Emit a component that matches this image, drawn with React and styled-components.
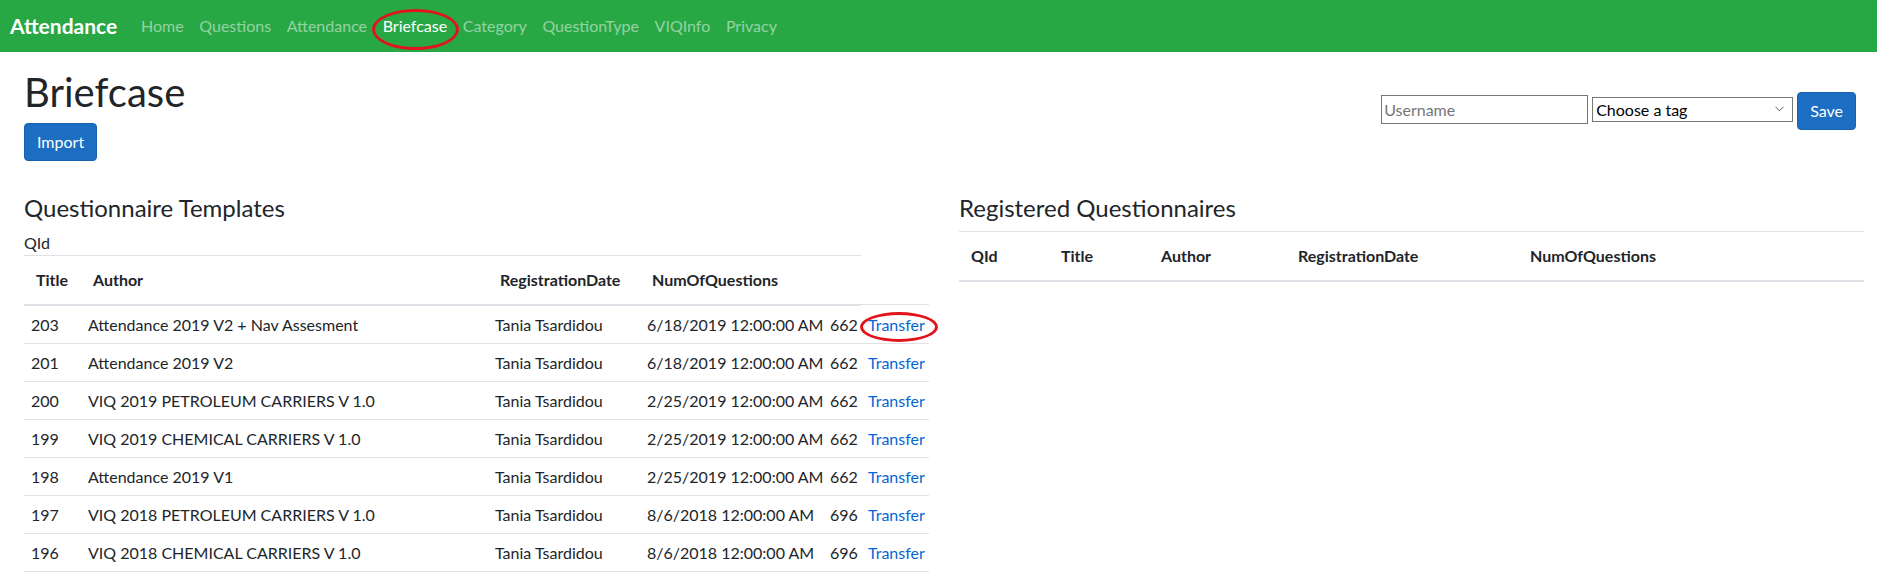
import React from 'react';
import styled, { createGlobalStyle } from 'styled-components';

const templates = [
  { id: 203, title: 'Attendance 2019 V2 + Nav Assesment', date: '6/18/2019 12:00:00 AM', num: 662 },
  { id: 201, title: 'Attendance 2019 V2', date: '6/18/2019 12:00:00 AM', num: 662 },
  { id: 200, title: 'VIQ 2019 PETROLEUM CARRIERS V 1.0', date: '2/25/2019 12:00:00 AM', num: 662 },
  { id: 199, title: 'VIQ 2019 CHEMICAL CARRIERS V 1.0', date: '2/25/2019 12:00:00 AM', num: 662 },
  { id: 198, title: 'Attendance 2019 V1', date: '2/25/2019 12:00:00 AM', num: 662 },
  { id: 197, title: 'VIQ 2018 PETROLEUM CARRIERS V 1.0', date: '8/6/2018 12:00:00 AM', num: 696 },
  { id: 196, title: 'VIQ 2018 CHEMICAL CARRIERS V 1.0', date: '8/6/2018 12:00:00 AM', num: 696 },
];

const navItems = ['Home', 'Questions', 'Attendance', 'Briefcase', 'Category', 'QuestionType', 'VIQInfo', 'Privacy'];

/* column widths picked off the screenshot */
const leftCols = [57, 407, 152, 183, 38, 68];
const rightCols = [90, 100, 137, 232, 346];

function App() {
  return (
    <>
      <GlobalStyle />
      <Navbar>
        <Brand href="#">Attendance</Brand>
        <NavList>
          {navItems.map((item) => (
            <li key={item}>
              <NavLink href="#" $active={item === 'Briefcase'}>
                {item}
                {item === 'Briefcase' && <Marker $t={3} $r={-4} $b={-4} $l={-3} />}
              </NavLink>
            </li>
          ))}
        </NavList>
      </Navbar>

      <Main>
        <Header>
          <div>
            <PageTitle>Briefcase</PageTitle>
            <Button>Import</Button>
          </div>
          <Form>
            <Input placeholder="Username" />
            <SelectWrap>
              <Select defaultValue="">
                <option value="">Choose a tag</option>
              </Select>
              <Chevron width="9" height="6" viewBox="0 0 9 6">
                <path d="M0.5 0.8 L4.5 4.8 L8.5 0.8" fill="none" stroke="#555" strokeWidth="1" />
              </Chevron>
            </SelectWrap>
            <Button>Save</Button>
          </Form>
        </Header>

        <Columns>
          <section>
            <SectionTitle>Questionnaire Templates</SectionTitle>
            <Caption>QId</Caption>
            <Table>
              <colgroup>
                {leftCols.map((w, i) => (
                  <Col key={i} $w={w} />
                ))}
              </colgroup>
              <thead>
                <tr>
                  <Th>Title</Th>
                  <Th>Author</Th>
                  <Th>RegistrationDate</Th>
                  <Th>NumOfQuestions</Th>
                  <Th />
                </tr>
              </thead>
              <tbody>
                {templates.map((t, i) => (
                  <tr key={t.id}>
                    <Td>{t.id}</Td>
                    <Td>{t.title}</Td>
                    <Td>Tania Tsardidou</Td>
                    <Td>{t.date}</Td>
                    <Td>{t.num}</Td>
                    <Td>
                      <Link href="#">
                        Transfer
                        {i === 0 && <Marker $t={-3} $r={-13} $b={-8} $l={-8} />}
                      </Link>
                    </Td>
                  </tr>
                ))}
              </tbody>
            </Table>
          </section>

          <section>
            <SectionTitle>Registered Questionnaires</SectionTitle>
            <Table>
              <colgroup>
                {rightCols.map((w, i) => (
                  <Col key={i} $w={w} />
                ))}
              </colgroup>
              <thead>
                <tr>
                  <Th>QId</Th>
                  <Th>Title</Th>
                  <Th>Author</Th>
                  <Th>RegistrationDate</Th>
                  <Th>NumOfQuestions</Th>
                </tr>
              </thead>
              <tbody />
            </Table>
          </section>
        </Columns>
      </Main>
    </>
  );
}

const GlobalStyle = createGlobalStyle`
  * { box-sizing: border-box; }
  body {
    margin: 0;
    font-family: "Segoe UI", Lato, "Liberation Sans", sans-serif;
    font-size: 16px;
    line-height: 1.5;
    color: #212529;
    background: #fff;
  }
`;

const Navbar = styled.nav`
  display: flex;
  align-items: center;
  height: 52px;
  padding: 0 10px;
  background: #28a745;
`;

const Brand = styled.a`
  margin-right: 16px;
  font-size: 21px;
  font-weight: 700;
  line-height: 30px;
  color: #fff;
  text-decoration: none;
`;

const NavList = styled.ul`
  display: flex;
  margin: 0;
  padding: 0;
  list-style: none;
`;

const NavLink = styled.a`
  position: relative;
  display: block;
  padding: 8px 7.8px;
  line-height: 24px;
  color: ${(p) => (p.$active ? '#fff' : 'rgba(255, 255, 255, 0.5)')};
  text-decoration: none;
`;

/* red hand-drawn style ring laid over a link */
const Marker = styled.span`
  position: absolute;
  top: ${(p) => p.$t}px;
  right: ${(p) => p.$r}px;
  bottom: ${(p) => p.$b}px;
  left: ${(p) => p.$l}px;
  border: 3.5px solid #e3131b;
  border-radius: 50%;
  pointer-events: none;
`;

const Main = styled.main`
  padding: 16px 13px 0 24px;
`;

const Header = styled.div`
  display: flex;
  justify-content: space-between;
  align-items: flex-start;
`;

const PageTitle = styled.h1`
  margin: 0 0 7px;
  font-size: 40px;
  font-weight: 400;
  line-height: 1.2;
`;

const Button = styled.button`
  display: inline-block;
  padding: 6px 12px;
  font-family: inherit;
  font-size: 16px;
  line-height: 24px;
  color: #fff;
  background: #1b6ec2;
  border: 1px solid #1861ac;
  border-radius: 4px;
`;

const Form = styled.form`
  display: flex;
  align-items: center;
  gap: 4px;
  margin: 24px 8px 0 0;
`;

const Input = styled.input`
  width: 207px;
  height: 29px;
  margin-top: -4px;
  padding: 1px 2px;
  font-family: inherit;
  font-size: 16px;
  color: #212529;
  border: 1px solid #767676;
  border-radius: 0;
  &::placeholder {
    color: #757575;
  }
`;

const SelectWrap = styled.span`
  position: relative;
  display: inline-block;
  margin-top: -4px;
`;

const Select = styled.select`
  width: 201px;
  height: 25px;
  padding: 0 20px 0 3px;
  font-family: inherit;
  font-size: 16px;
  color: #000;
  background: #fff;
  border: 1px solid #767676;
  border-radius: 0;
  appearance: none;
`;

const Chevron = styled.svg`
  position: absolute;
  top: 9px;
  right: 9px;
  pointer-events: none;
`;

const Columns = styled.div`
  display: grid;
  grid-template-columns: 1fr 1fr;
  column-gap: 30px;
  margin-top: 33px;
`;

const SectionTitle = styled.h4`
  margin: 0 0 8px;
  font-size: 24px;
  font-weight: 400;
  line-height: 1.2;
`;

const Caption = styled.div`
  line-height: 24px;
`;

const Table = styled.table`
  width: 100%;
  border-collapse: collapse;
  table-layout: fixed;
  tbody tr:last-child td {
    border-bottom: 1px solid #dee2e6;
  }
`;

const Col = styled.col`
  width: ${(p) => p.$w}px;
`;

const Th = styled.th`
  padding: 12px;
  font-weight: 700;
  text-align: left;
  vertical-align: bottom;
  white-space: nowrap;
  border-top: 1px solid #dee2e6;
  border-bottom: 2px solid #dee2e6;
`;

const Td = styled.td`
  padding: 7px 7px 6px;
  white-space: nowrap;
  border-top: 1px solid #dee2e6;
`;

const Link = styled.a`
  position: relative;
  color: #0366d6;
  text-decoration: none;
`;

export default App;
